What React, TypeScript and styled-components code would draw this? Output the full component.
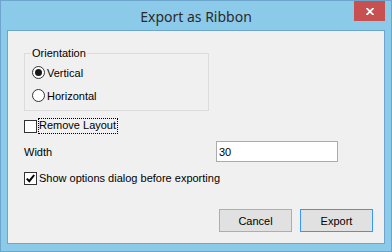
import React, { useState } from "react";
import styled, { createGlobalStyle } from "styled-components";

const GlobalStyle = createGlobalStyle`
  html, body {
    margin: 0;
    padding: 0;
    background: #ffffff;
  }
  * {
    box-sizing: border-box;
  }
`;

// Window chrome
const Window = styled.div`
  width: 392px;
  height: 252px;
  display: flex;
  flex-direction: column;
  background: #8ccaea;
  border: 1px solid #6ea5cc;
  font-family: "Liberation Sans", Arial, sans-serif;
  font-size: 11px;
  color: #000;
`;

const TitleBar = styled.div`
  height: 29px;
  display: grid;
  grid-template-columns: 1fr auto 1fr;
  align-items: start;
`;

const Title = styled.div`
  grid-column: 2;
  padding-top: 6px;
  font-family: "Noto Sans", "Open Sans", sans-serif;
  font-size: 14px;
  color: #2b2b2b;
  white-space: nowrap;
`;

const CloseButton = styled.div`
  grid-column: 3;
  justify-self: end;
  width: 31px;
  height: 20px;
  margin-right: 6px;
  background: #c75050;
  display: flex;
  align-items: center;
  justify-content: center;
`;

const Frame = styled.div`
  flex: 1;
  padding: 0 6px 7px 6px;
  display: flex;
`;

const Client = styled.div`
  flex: 1;
  background: #f0f0f0;
  border: 1px solid #6ea5cc;
  display: flex;
  flex-direction: column;
  padding: 0 11px 11px 16px;
`;

// Group box
const GroupBox = styled.div`
  position: relative;
  margin-top: 22px;
  width: 185px;
  height: 58px;
  border: 1px solid #dcdcdc;
  padding: 7px 0 3px 7px;
`;

const Legend = styled.span`
  position: absolute;
  top: -7px;
  left: 6px;
  padding: 0 1px;
  background: #f0f0f0;
  line-height: 13px;
`;

const OptionRow = styled.label`
  height: 23px;
  display: flex;
  align-items: center;
  gap: 2px;
  cursor: default;
`;

const RadioCircle = styled.span<{ $checked: boolean }>`
  width: 13px;
  height: 13px;
  border-radius: 50%;
  border: 1px solid #333;
  background: #fff;
  display: flex;
  align-items: center;
  justify-content: center;

  &::after {
    content: "";
    width: 7px;
    height: 7px;
    border-radius: 50%;
    background: ${(p) => (p.$checked ? "#1a1a1a" : "transparent")};
  }
`;

const CheckRow = styled.label<{ $top: number }>`
  margin-top: ${(p) => p.$top}px;
  height: 14px;
  display: flex;
  align-items: center;
  gap: 2px;
`;

const CheckBox = styled.span`
  width: 13px;
  height: 13px;
  border: 1px solid #333;
  background: #fff;
  display: flex;
  align-items: center;
  justify-content: center;
`;

const FocusText = styled.span`
  outline: 1px dotted #000;
  padding: 0 1px 1px 0;
  line-height: 13px;
`;

const FieldRow = styled.div`
  margin-top: 8px;
  height: 21px;
  display: flex;
  align-items: center;
`;

const FieldLabel = styled.span`
  width: 192px;
`;

const TextBox = styled.input`
  width: 122px;
  height: 21px;
  border: 1px solid #ababab;
  background: #fff;
  font-family: inherit;
  font-size: 11px;
  padding: 0 2px;
  outline: none;
`;

const ButtonRow = styled.div`
  margin-top: auto;
  display: flex;
  justify-content: flex-end;
  gap: 8px;
`;

const Button = styled.button<{ $default?: boolean }>`
  width: 73px;
  height: 23px;
  background: #e1e1e1;
  border: 1px solid ${(p) => (p.$default ? "#3399ff" : "#adadad")};
  font-family: inherit;
  font-size: 11px;
  color: #000;
  padding: 0;
`;

export default function App() {
  const [orientation, setOrientation] = useState("vertical");
  const [width, setWidth] = useState("30");

  return (
    <>
      <GlobalStyle />
      <Window>
        <TitleBar>
          <Title>Export as Ribbon</Title>
          <CloseButton>
            <svg width="8" height="7" viewBox="0 0 8 7">
              <path d="M0.5 0 L7.5 7 M7.5 0 L0.5 7" stroke="#fff" strokeWidth="1.8" />
            </svg>
          </CloseButton>
        </TitleBar>
        <Frame>
          <Client>
            <GroupBox>
              <Legend>Orientation</Legend>
              <OptionRow onClick={() => setOrientation("vertical")}>
                <RadioCircle $checked={orientation === "vertical"} />
                Vertical
              </OptionRow>
              <OptionRow onClick={() => setOrientation("horizontal")}>
                <RadioCircle $checked={orientation === "horizontal"} />
                Horizontal
              </OptionRow>
            </GroupBox>

            <CheckRow $top={8}>
              <CheckBox />
              <FocusText>Remove Layout</FocusText>
            </CheckRow>

            <FieldRow>
              <FieldLabel>Width</FieldLabel>
              <TextBox value={width} onChange={(e) => setWidth(e.target.value)} />
            </FieldRow>

            <CheckRow $top={9}>
              <CheckBox>
                <svg width="9" height="9" viewBox="0 0 9 9">
                  <path d="M0.8 4.6 L3.3 7.2 L8.2 1" fill="none" stroke="#000" strokeWidth="2" />
                </svg>
              </CheckBox>
              Show options dialog before exporting
            </CheckRow>

            <ButtonRow>
              <Button>Cancel</Button>
              <Button $default>Export</Button>
            </ButtonRow>
          </Client>
        </Frame>
      </Window>
    </>
  );
}
